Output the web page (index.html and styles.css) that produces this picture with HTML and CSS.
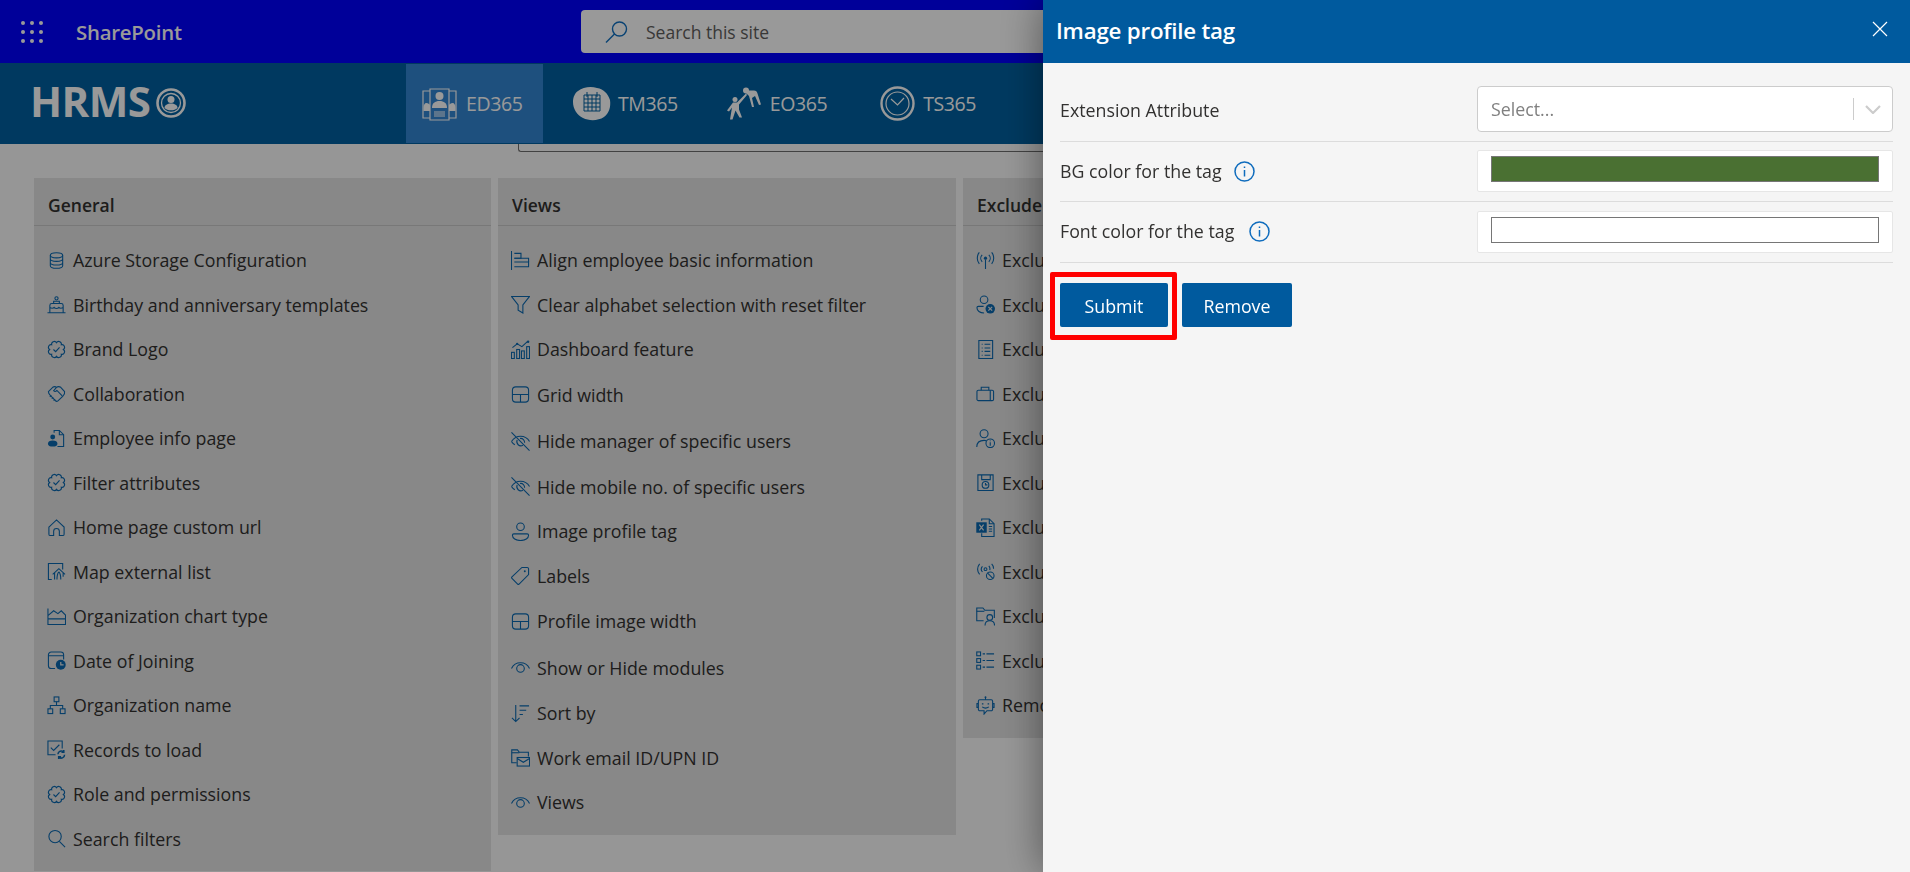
FILE: index.html
```html
<!DOCTYPE html>
<html lang="en">
<head>
<meta charset="utf-8">
<title>Image profile tag</title>
<link rel="stylesheet" href="styles.css">
</head>
<body>
<svg class="sprite" xmlns="http://www.w3.org/2000/svg">
  <symbol id="i-db" viewBox="0 0 20 20"><ellipse cx="10" cy="4.5" rx="6.5" ry="2.7"/><path d="M3.5 4.5v11c0 1.5 3 2.7 6.5 2.7s6.5-1.2 6.5-2.7v-11M3.5 8.200c0 1.500 3 2.700 6.500 2.700s6.500-1.200 6.500-2.700M3.500 12c0 1.500 3 2.700 6.500 2.700s6.500-1.200 6.500-2.700"/></symbol>
  <symbol id="i-cake" viewBox="0 0 20 20"><circle cx="10" cy="3.500" r="1.700"/><path d="M7 9V6.500h6V9M3 18.500V11a2 2 0 0 1 2-2h10a2 2 0 0 1 2 2v7.500M.5 18.700h19M3 13c2 1.500 3 1.500 4.500 0 1.500 1.500 3.500 1.500 5 0 1.500 1.500 2.500 1.500 4.500 0"/></symbol>
  <symbol id="i-badge" viewBox="0 0 20 20"><path d="M4.910 4.910A2.800 2.800 0 0 1 10 2.800a2.800 2.800 0 0 1 5.090 2.110A2.800 2.800 0 0 1 17.200 10a2.800 2.800 0 0 1-2.110 5.090A2.800 2.800 0 0 1 10 17.200a2.800 2.800 0 0 1-5.090-2.110A2.800 2.800 0 0 1 2.800 10a2.800 2.800 0 0 1 2.110-5.090z"/><path d="m6.800 10 2.300 2.300 4.100-4.600"/></symbol>
  <symbol id="i-shake" viewBox="0 0 20 20"><path d="M1.500 8 6 3.500c1.500-1 3-.8 4 0 1.500-1 3-1 4.500 0L18.500 8c.6 2-.5 3.500-2 5l-5 4.800c-1 .8-2 .6-2.700-.2L3 11.500C2 10.500 1.500 9.500 1.500 8z"/><path d="M10 3.500 7 7c1 1.300 2.500 1 3.500-.2l5.500 5.700M4.500 12 3 13.500M6.500 14 5 15.500M8.500 16 7 17.500"/></symbol>
  <symbol id="i-empinfo" viewBox="0 0 20 20"><path d="M7.500 4V1.500H13L17.500 6v12.500H11"/><path d="M13 1.500V6h4.500"/><circle class="solid" cx="6" cy="8.500" r="2.600"/><path class="solid" d="M1 15.500c0-2 2-3.300 5-3.300s5 1.300 5 3.300c0 2-2 3-5 3s-5-1-5-3z"/></symbol>
  <symbol id="i-home" viewBox="0 0 20 20"><path d="M2 9.500 10 2l8 7.500V17a1.500 1.500 0 0 1-1.500 1.500H13V14a3 3 0 0 0-6 0v4.500H3.500A1.500 1.500 0 0 1 2 17z"/></symbol>
  <symbol id="i-map" viewBox="0 0 20 20"><path d="M5 18.500H1.500v-17h15V8"/><path d="m6 13 6.500-6 6.500 6M8 11.500v7M12.500 10.500c-1.500 1.500-2 4-2 8M12.500 10.500c1.500 1.500 2 4 2 8M17 11.500v4"/></symbol>
  <symbol id="i-chart" viewBox="0 0 20 20"><path d="M1 1.500v17h18.500V8.500L15 4l-3.500 3L7 4 1 9M1 12.500h18.500"/></symbol>
  <symbol id="i-date" viewBox="0 0 20 20"><path d="M8.500 18.500H4.500a3 3 0 0 1-3-3V4a3 3 0 0 1 3-3h10a3 3 0 0 1 3 3v5M1.500 5h16"/><circle class="solid" cx="14.500" cy="14.500" r="5.200"/><path class="cut" d="M14.500 11.500v3h3"/></symbol>
  <symbol id="i-org" viewBox="0 0 20 20"><rect x="7.500" y="1" width="5" height="5"/><rect x="1" y="13.500" width="5" height="5"/><rect x="14" y="13.500" width="5" height="5"/><path d="M10 6v4M3.500 13.500V10h13v3.500"/></symbol>
  <symbol id="i-records" viewBox="0 0 20 20"><path d="M9 15.500H1V1h15v8"/><path d="m4 8 3 3 6-6"/><path class="thick" d="M11.500 15a3.500 3.500 0 0 1 6-2.300M18.500 15.500a3.500 3.500 0 0 1-6 2.500M17.700 10.500v2.500h-2.500M12.300 20v-2.300h2.500"/></symbol>
  <symbol id="i-search" viewBox="0 0 20 20"><circle cx="8.500" cy="8" r="6.500"/><path d="m13 13 6 6"/></symbol>
  <symbol id="i-align" viewBox="0 0 20 20"><path d="M.5 0v20M3.500 2.500h7v5.200h-7M3.500 11.500h15v5h-15"/><path d="M3.500 7.700h15v3.800"/></symbol>
  <symbol id="i-filter" viewBox="0 0 20 20"><path d="M.5 1.500h19l-7 9v8.500l-5-3v-5.500z"/></symbol>
  <symbol id="i-dash" viewBox="0 0 20 20"><rect x=".5" y="13" width="3" height="6.500"/><rect x="6" y="10" width="3" height="9.500"/><rect x="11" y="11.500" width="3" height="8"/><rect x="16.500" y="7" width="3" height="12.500"/><path d="m1.500 8 5-4 5 3 6-5.500"/><circle class="solid" cx="18" cy="1.800" r="1.300"/><circle class="solid" cx="6.500" cy="4" r="1.200"/></symbol>
  <symbol id="i-grid" viewBox="0 0 20 20"><rect x="1.500" y="2" width="17" height="16" rx="3.500"/><path d="M1.500 10h17M10 10v8"/></symbol>
  <symbol id="i-eyeoff" viewBox="0 0 20 20"><path d="M.5 10C3 6.500 6 4.500 10 4.500c4 0 7.500 2 9.500 5.500M.5 10c1 1.500 2 2.500 3.500 3.500M6.500 8.500a4.300 4.300 0 0 0 6 5.500M9.500 6.800c3-.5 5 2 4.800 4.500M.5.500l19 19"/></symbol>
  <symbol id="i-person" viewBox="0 0 20 20"><circle cx="10" cy="5" r="4"/><path d="M1.500 14c0-.8.600-1.500 1.500-1.500h14c.9 0 1.500.7 1.500 1.500 0 3-3.500 5.500-8.500 5.500S1.500 17 1.500 14z"/></symbol>
  <symbol id="i-tag" viewBox="0 0 20 20"><path d="M18.500 3a1.500 1.500 0 0 0-1.500-1.500h-5.500L1 11.500c-.5.500-.5 1 0 1.500l6 6c.5.500 1 .5 1.500 0L18.500 9z"/><circle class="solid" cx="14.500" cy="5.500" r="1"/></symbol>
  <symbol id="i-eye" viewBox="0 0 20 20"><path d="M.5 11C2.500 7 6 5 10 5s7.500 2 9.500 6"/><circle cx="10" cy="11" r="4"/></symbol>
  <symbol id="i-sort" viewBox="0 0 20 20"><path d="M5 1v17.500M1 14.500l4 4 4-4M9 2h10M9 6.500h7M9 11h3.500"/></symbol>
  <symbol id="i-foldermail" viewBox="0 0 20 20"><path d="M6 15.500H.8V2h6l2 2.500h9.500V9"/><path d="M.8 5h8"/><rect x="6.500" y="10" width="13" height="9"/><path d="m6.500 11 6.500 4 6.500-4"/></symbol>
  <symbol id="i-antenna" viewBox="0 0 20 20"><circle class="solid" cx="10" cy="7.500" r="1.700"/><path d="M10 9v10M6.500 4a5.500 5.500 0 0 0 0 7.500M13.500 4a5.500 5.500 0 0 1 0 7.500M3.500 1.500a9.500 9.500 0 0 0 0 12M16.500 1.500a9.500 9.500 0 0 1 0 12"/></symbol>
  <symbol id="i-userx" viewBox="0 0 20 20"><circle cx="8.500" cy="5" r="4"/><path d="M1 13.500c0-1 .6-1.500 1.500-1.500H8M1 13.500c0 3 3 5.500 7.500 5.500"/><circle class="solid" cx="15" cy="14.500" r="5"/><path class="cut" d="m13 12.500 4 4M17 12.500l-4 4"/></symbol>
  <symbol id="i-doclist" viewBox="0 0 20 20"><rect x="3" y=".5" width="14.500" height="19"/><path d="M6 4.500h1M9 4.500h6M6 8.500h1M9 8.500h6M6 12h1M9 12h6M6 16h1M9 16h6"/></symbol>
  <symbol id="i-case" viewBox="0 0 20 20"><rect x="1" y="6.500" width="17.500" height="11" rx="1.500"/><path d="M5.500 6.500V3.500h8v3M15 6.500v11"/></symbol>
  <symbol id="i-userinfo" viewBox="0 0 20 20"><circle cx="8.500" cy="5" r="4.200"/><path d="M.8 19c0-4.500 3-7 7.700-7 1 0 2 .2 2.500.5"/><circle cx="15" cy="15" r="4.500"/><path d="M15 14v3.500M15 12v1"/></symbol>
  <symbol id="i-save" viewBox="0 0 20 20"><path d="M2 2h16v16.500H2zM6 2v5h9V2"/><circle cx="10" cy="12.500" r="3.500"/><path d="M10 10.500v2h2"/></symbol>
  <symbol id="i-excel" viewBox="0 0 20 20"><path d="M6 3V1h8l5 5v13.500H6V16"/><path d="M14 1v5h5"/><rect class="solid" x=".3" y="4.500" width="11" height="11"/><path class="cut" d="m3.500 7 4.500 6M8 7l-4.500 6"/><path d="M13.500 9h3.500M13.500 11.500h3.500M13.500 14h3.500"/></symbol>
  <symbol id="i-nosignal" viewBox="0 0 20 20"><circle cx="10" cy="7.500" r="1.500"/><path d="M6.800 4.500a4.500 4.500 0 0 0 0 6M3.800 2a9 9 0 0 0 0 11M13.500 4a5 5 0 0 1 1 4.500M16.500 2c1 1 2 3 2 5"/><circle cx="15" cy="14.500" r="4"/><path d="m12 11.500 6 6"/></symbol>
  <symbol id="i-folderuser" viewBox="0 0 20 20"><path d="M8 14.500H.8V1h6.500l2 2.500h10v8"/><path d="M.8 4.500h8"/><circle cx="14.500" cy="11" r="3"/><path d="M9.500 19.500c0-3 2-5 5-5s5 2 5 5"/></symbol>
  <symbol id="i-tasks" viewBox="0 0 20 20"><rect x=".8" y="1" width="4" height="4"/><rect x=".8" y="8" width="4" height="4"/><rect x=".8" y="15" width="4" height="4"/><path d="M7 3h2.500M11 3h8M7 10h2.500M11 10h8M7 17h2.500M11 17h8"/></symbol>
  <symbol id="i-bot" viewBox="0 0 20 20"><path d="M10 4V1"/><circle class="solid" cx="10" cy="1.200" r="1"/><path d="M4 4h12a1.500 1.500 0 0 1 1.500 1.500V14a1.500 1.500 0 0 1-1.500 1.500h-4.500L8.500 19v-3.500H4A1.500 1.500 0 0 1 2.500 14V5.500A1.500 1.500 0 0 1 4 4zM2.500 8H1v4h1.500M17.500 8H19v4h-1.500M6.500 11.500c2 1.500 5 1.500 7 0"/><path class="thick" d="M7 7.500v1.500M13 7.500v1.500"/></symbol>
</svg>

<header class="suitebar">
  <svg class="waffle" viewBox="0 0 22 22" aria-hidden="true"><g><circle cx="2" cy="2" r="2"/><circle cx="11" cy="2" r="2"/><circle cx="20" cy="2" r="2"/><circle cx="2" cy="11" r="2"/><circle cx="11" cy="11" r="2"/><circle cx="20" cy="11" r="2"/><circle cx="2" cy="20" r="2"/><circle cx="11" cy="20" r="2"/><circle cx="20" cy="20" r="2"/></g></svg>
  <span class="brand">SharePoint</span>
  <div class="sitesearch">
    <svg class="sitesearch-icon" viewBox="0 0 23 22" aria-hidden="true"><circle cx="14.500" cy="8" r="7"/><path d="M9.500 13 1 21.500"/></svg>
    <span>Search this site</span>
  </div>
</header>

<nav class="appbar">
  <div class="logo"><span>HRMS</span>
    <svg class="logo-mark" viewBox="0 0 30 30" aria-hidden="true"><circle class="ring" cx="15" cy="15" r="13.500"/><circle class="ring2" cx="15" cy="15" r="9.500"/><circle class="fill" cx="15" cy="11.500" r="3.500"/><path class="fill" d="M8.500 20c0-3 3-4.500 6.500-4.500s6.500 1.500 6.500 4.500c-1.500 1.500-4 2.300-6.500 2.300S10 21.500 8.500 20z"/></svg>
  </div>
  <div class="tabs">
    <a class="tab active">
      <svg class="tab-icon" viewBox="0 0 35 35" aria-hidden="true"><path class="line" d="M8 3h19v31H8zM8 5H1v27h7M27 5h7v27h-7"/><circle class="fill" cx="17.500" cy="10" r="4"/><path class="fill" d="M10 22c0-5 3-7 7.500-7s7.500 2 7.500 7z"/><path class="fill" d="M1.500 22c0-3 1-5 3-5 1.500 0 3 1 3.500 2v6H1.500zM33.500 22c0-3-1-5-3-5-1.500 0-3 1-3.500 2v6h6.500z"/><path class="line" d="M12 26h11M12 28h11M12 30h11"/></svg>
      <span>ED365</span>
    </a>
    <a class="tab tab-tm">
      <svg class="tab-icon wide" viewBox="0 0 38 35" aria-hidden="true"><path class="fill" d="M5 5c5-4 13-5 19-3 7 1 11 6 13 12 1 7-1 13-6 17-6 4-15 4-21 1C4 29 0 23 0 16 0 11 2 7 5 5z"/><path class="cutline" d="M11 9h16v16H11zM11 13h16M15 9v16M19 9v16M23 9v16M11 17h16M11 21h16M14 6v5M24 6v5"/></svg>
      <span>TM365</span>
    </a>
    <a class="tab tab-eo">
      <svg class="tab-icon" viewBox="0 0 35 32" aria-hidden="true"><circle class="fill" cx="9" cy="12" r="2.500"/><path class="fill" d="M7 15h4l3-3 6-6 1 1.500L13 17v5l3 8h-2.500L9.500 23l-3 9H4l2-12-3 4-2-1z"/><circle class="fill" cx="20" cy="3" r="3"/><path class="fill" d="M22 3h6c2 0 3 1 3.500 3L35 17l-2 .5-4-9-3 2 2 9h-2l-3-11-4-4z"/></svg>
      <span>EO365</span>
    </a>
    <a class="tab tab-ts">
      <svg class="tab-icon" viewBox="0 0 35 35" aria-hidden="true"><circle class="thickline" cx="17.500" cy="17.500" r="16"/><circle class="line" cx="17.500" cy="17.500" r="11.500"/><path class="line" d="M11 13l6.500 6L24 12"/></svg>
      <span>TS365</span>
    </a>
    <a class="tab tab-next">
      <svg class="tab-icon" viewBox="0 0 35 35" aria-hidden="true"><path class="line" d="M1 17C3 8 10 4 18 4M4 17c2-6 8-9 14-9"/></svg>
    </a>
  </div>
</nav>

<main class="content">
  <div class="search-edge"></div>
  <div class="columns">
    <section class="card">
      <h2 class="card-title">General</h2>
      <ul class="list">
        <li class="item"><svg class="ico"><use href="#i-db"/></svg><span>Azure Storage Configuration</span></li>
        <li class="item"><svg class="ico"><use href="#i-cake"/></svg><span>Birthday and anniversary templates</span></li>
        <li class="item"><svg class="ico"><use href="#i-badge"/></svg><span>Brand Logo</span></li>
        <li class="item"><svg class="ico"><use href="#i-shake"/></svg><span>Collaboration</span></li>
        <li class="item"><svg class="ico"><use href="#i-empinfo"/></svg><span>Employee info page</span></li>
        <li class="item"><svg class="ico"><use href="#i-badge"/></svg><span>Filter attributes</span></li>
        <li class="item"><svg class="ico"><use href="#i-home"/></svg><span>Home page custom url</span></li>
        <li class="item"><svg class="ico"><use href="#i-map"/></svg><span>Map external list</span></li>
        <li class="item"><svg class="ico"><use href="#i-chart"/></svg><span>Organization chart type</span></li>
        <li class="item"><svg class="ico"><use href="#i-date"/></svg><span>Date of Joining</span></li>
        <li class="item"><svg class="ico"><use href="#i-org"/></svg><span>Organization name</span></li>
        <li class="item"><svg class="ico"><use href="#i-records"/></svg><span>Records to load</span></li>
        <li class="item"><svg class="ico"><use href="#i-badge"/></svg><span>Role and permissions</span></li>
        <li class="item"><svg class="ico"><use href="#i-search"/></svg><span>Search filters</span></li>
      </ul>
    </section>
    <section class="card">
      <h2 class="card-title">Views</h2>
      <ul class="list">
        <li class="item"><svg class="ico"><use href="#i-align"/></svg><span>Align employee basic information</span></li>
        <li class="item"><svg class="ico"><use href="#i-filter"/></svg><span>Clear alphabet selection with reset filter</span></li>
        <li class="item"><svg class="ico"><use href="#i-dash"/></svg><span>Dashboard feature</span></li>
        <li class="item tall"><svg class="ico"><use href="#i-grid"/></svg><span>Grid width</span></li>
        <li class="item tall"><svg class="ico"><use href="#i-eyeoff"/></svg><span>Hide manager of specific users</span></li>
        <li class="item"><svg class="ico"><use href="#i-eyeoff"/></svg><span>Hide mobile no. of specific users</span></li>
        <li class="item"><svg class="ico"><use href="#i-person"/></svg><span>Image profile tag</span></li>
        <li class="item"><svg class="ico"><use href="#i-tag"/></svg><span>Labels</span></li>
        <li class="item tall"><svg class="ico"><use href="#i-grid"/></svg><span>Profile image width</span></li>
        <li class="item tall"><svg class="ico"><use href="#i-eye"/></svg><span>Show or Hide modules</span></li>
        <li class="item"><svg class="ico"><use href="#i-sort"/></svg><span>Sort by</span></li>
        <li class="item"><svg class="ico"><use href="#i-foldermail"/></svg><span>Work email ID/UPN ID</span></li>
        <li class="item"><svg class="ico"><use href="#i-eye"/></svg><span>Views</span></li>
      </ul>
    </section>
    <section class="card">
      <h2 class="card-title">Exclude</h2>
      <ul class="list">
        <li class="item"><svg class="ico"><use href="#i-antenna"/></svg><span>Exclude</span></li>
        <li class="item"><svg class="ico"><use href="#i-userx"/></svg><span>Exclude</span></li>
        <li class="item"><svg class="ico"><use href="#i-doclist"/></svg><span>Exclude</span></li>
        <li class="item"><svg class="ico"><use href="#i-case"/></svg><span>Exclude</span></li>
        <li class="item"><svg class="ico"><use href="#i-userinfo"/></svg><span>Exclude</span></li>
        <li class="item"><svg class="ico"><use href="#i-save"/></svg><span>Exclude</span></li>
        <li class="item"><svg class="ico"><use href="#i-excel"/></svg><span>Exclude</span></li>
        <li class="item"><svg class="ico"><use href="#i-nosignal"/></svg><span>Exclude</span></li>
        <li class="item"><svg class="ico"><use href="#i-folderuser"/></svg><span>Exclude</span></li>
        <li class="item"><svg class="ico"><use href="#i-tasks"/></svg><span>Exclude</span></li>
        <li class="item"><svg class="ico"><use href="#i-bot"/></svg><span>Remove</span></li>
      </ul>
    </section>
  </div>
</main>

<div class="overlay"></div>

<aside class="panel">
  <div class="panel-head">
    <h1 class="panel-title">Image profile tag</h1>
    <svg class="panel-close" viewBox="0 0 16 16" aria-hidden="true"><path d="m1 1 14 14M15 1 1 15"/></svg>
  </div>
  <div class="panel-body">
    <div class="form-row first">
      <div class="form-label">Extension Attribute</div>
      <div class="select">
        <span class="select-value">Select...</span>
        <span class="select-sep"></span>
        <svg class="select-chev" viewBox="0 0 16 9" aria-hidden="true"><path d="m1 1 7 7 7-7"/></svg>
      </div>
    </div>
    <div class="form-row">
      <div class="form-label">BG color for the tag
        <svg class="info" viewBox="0 0 21 21" aria-hidden="true"><circle cx="10.500" cy="10.500" r="9.500"/><path d="M10.500 9v6.500"/><path d="M10.500 5.500v1.500"/></svg>
      </div>
      <div class="swatch-box"><div class="swatch green"></div></div>
    </div>
    <div class="form-row last">
      <div class="form-label">Font color for the tag
        <svg class="info" viewBox="0 0 21 21" aria-hidden="true"><circle cx="10.500" cy="10.500" r="9.500"/><path d="M10.500 9v6.500"/><path d="M10.500 5.500v1.500"/></svg>
      </div>
      <div class="swatch-box"><div class="swatch white"></div></div>
    </div>
    <div class="actions">
      <button class="btn submit">Submit</button>
      <button class="btn remove">Remove</button>
    </div>
  </div>
</aside>
</body>
</html>
```

FILE: styles.css
```css
* { box-sizing: border-box; }
html, body { margin: 0; padding: 0; }
body {
  width: 1910px;
  height: 872px;
  overflow: hidden;
  background: #fbfbfb;
  font-family: "Open Sans", "Noto Sans", sans-serif;
  color: #323130;
}
.sprite { display: none; }

.suitebar {
  height: 63px;
  background: #0000ff;
  display: flex;
  align-items: center;
  color: #fff;
}
.waffle { width: 22px; height: 22px; margin-left: 21px; fill: #fff; }
.brand { margin-left: 33px; width: 105px; font-size: 20.400px; font-weight: 600; letter-spacing: -.25px; white-space: nowrap; }
.sitesearch {
  margin-left: 400px;
  width: 620px;
  height: 43px;
  background: #fff;
  border-radius: 4px;
  display: flex;
  align-items: center;
  padding-left: 24px;
  font-size: 17.500px;
  color: #605e5c;
}
.sitesearch-icon { width: 23px; height: 22px; margin-right: 18px; fill: none; stroke: #0f6fc0; stroke-width: 1.400; }

.appbar {
  height: 81px;
  background: #0060a0;
  display: flex;
  color: #fff;
}
.logo {
  width: 406px;
  padding: 17px 0 0 30px;
  display: flex;
  gap: 6px;
  font-family: "Open Sans", sans-serif;
  font-weight: 700;
  font-size: 42px;
  line-height: 42px;
  letter-spacing: -.6px;
}
.logo-mark { width: 30px; height: 30px; margin-top: 8px; }
.logo-mark .ring { fill: none; stroke: #fff; stroke-width: 2.600; }
.logo-mark .ring2 { fill: none; stroke: #fff; stroke-width: 1.300; }
.logo-mark .fill { fill: #fff; }

.tabs { display: flex; height: 79px; margin-top: 1px; font-size: 19.500px; }
.tab {
  display: flex;
  align-items: center;
  gap: 9px;
  padding: 0 16px;
  letter-spacing: -.4px;
}
.tab.active { background: #3286d2; width: 137px; }
.tab-icon { width: 35px; height: 35px; flex: none; }
.tab-icon.wide { width: 38px; }
.tab-icon .line { fill: none; stroke: #fff; stroke-width: 1.200; }
.tab-icon .thickline { fill: none; stroke: #fff; stroke-width: 2.400; }
.tab-icon .fill { fill: #fff; }
.tab-icon .cutline { fill: none; stroke: #0060a0; stroke-width: 1; }
.tab-tm { margin-left: 14px; gap: 7px; }
.tab-eo { margin-left: 16px; }
.tab-ts { margin-left: 21px; gap: 8px; }
.tab-next { margin-left: 24px; padding-left: 40px; }

.content { padding-left: 34px; }
.search-edge {
  margin-left: 484px;
  width: 800px;
  height: 8px;
  border-left: 1px solid #6f6f6f;
  border-bottom: 1px solid #6f6f6f;
  border-bottom-left-radius: 3px;
}
.columns { display: flex; align-items: flex-start; gap: 7px; margin-top: 26px; }
.card { width: 458px; flex: none; background: #e3e3e3; }
.card:first-child { width: 457px; }
.card-title {
  margin: 0;
  height: 48px;
  padding: 7px 0 0 14px;
  border-bottom: 1px solid #c8c8c8;
  display: flex;
  align-items: center;
  font-size: 17.500px;
  font-weight: 600;
  color: #323130;
}
.list { list-style: none; margin: 0; padding: 12px 0 10px 13px; }
.item {
  height: 44.500px;
  display: flex;
  align-items: center;
  gap: 7px;
  font-size: 17.800px;
  white-space: nowrap;
  color: #323130;
}
.item.tall { height: 46.500px; }
.ico {
  width: 19px;
  height: 19px;
  flex: none;
  fill: none;
  stroke: #0a68b0;
  stroke-width: 1.150;
}
.solid { fill: #0a68b0; stroke: none; }
.cut { fill: none; stroke: #e3e3e3; stroke-width: 1.300; }
.thick { stroke-width: 1.600; }

.overlay {
  position: fixed;
  inset: 0;
  background: rgba(0, 0, 0, .4);
}

.panel {
  position: fixed;
  top: 0;
  right: 0;
  bottom: 0;
  width: 867px;
  background: #f5f5f5;
  box-shadow: 0 0 40px rgba(0, 0, 0, .45);
  display: flex;
  flex-direction: column;
}
.panel-head {
  height: 63px;
  flex: none;
  background: #005a9e;
  color: #fff;
  display: flex;
  align-items: center;
  justify-content: space-between;
  padding: 0 22px 3px 13px;
}
.panel-title { margin: 0; font-size: 22.300px; font-weight: 600; letter-spacing: -.2px; }
.panel-close { width: 16px; height: 16px; margin-bottom: 2px; fill: none; stroke: #fff; stroke-width: 1.200; }
.panel-body { padding: 23px 17px 0; }
.form-row {
  display: flex;
  align-items: center;
  justify-content: space-between;
  padding: 8px 0 9px;
  border-bottom: 1px solid #dcdcdc;
}
.form-row.first { padding-top: 0; }
.form-row.last { padding-top: 9px; }
.form-label {
  display: flex;
  align-items: center;
  gap: 12px;
  font-size: 17.800px;
  color: #323130;
  white-space: nowrap;
}
.first .form-label { padding-top: 2px; }
.last .form-label { padding-bottom: 2px; gap: 15px; }
.info { width: 21px; height: 21px; fill: none; stroke: #0f6cbd; stroke-width: 1.500; }
.select {
  width: 416px;
  height: 46px;
  background: #fff;
  border: 1px solid #ccc;
  border-radius: 4px;
  display: flex;
  align-items: center;
  padding-left: 13px;
  font-size: 17.800px;
  color: #808080;
}
.select-value { flex: 1; }
.select-sep { width: 1px; height: 22px; background: #ccc; }
.select-chev { width: 16px; height: 9px; margin: 0 11px; fill: none; stroke: #ccc; stroke-width: 2.200; }
.swatch-box {
  width: 416px;
  height: 42px;
  background: #fff;
  border: 1px solid #e6e6e6;
  border-radius: 2px;
  padding: 5px 13px;
}
.swatch { height: 26px; border: 1px solid #767676; }
.swatch.green { background: #4a7032; }
.swatch.white { background: #fff; }
.actions { display: flex; gap: 14px; margin-top: 20px; }
.btn {
  height: 44px;
  border: 0;
  border-radius: 2px;
  padding: 2px 0 0;
  background: #005a9e;
  color: #fff;
  font: inherit;
  font-size: 17.800px;
}
.submit { width: 108px; position: relative; }
.remove { width: 110px; }
.submit::after {
  content: "";
  position: absolute;
  inset: -11px -9px -13px -10px;
  border: 5px solid #ff0000;
  border-radius: 2px;
}
```
